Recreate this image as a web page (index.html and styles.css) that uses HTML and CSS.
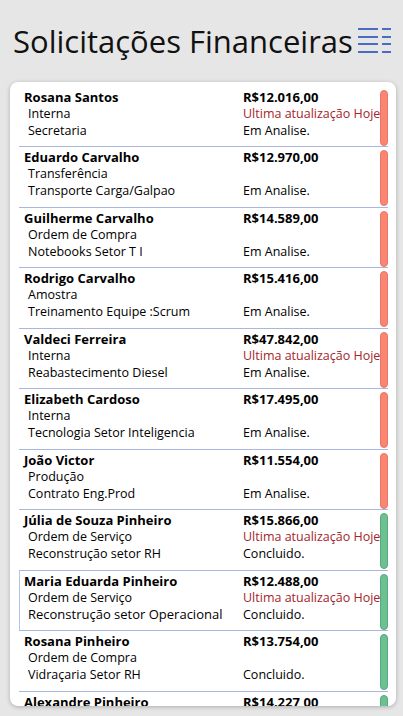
FILE: index.html
```html
<!DOCTYPE html>
<html lang="pt">
<head>
<meta charset="utf-8">
<title>Solicitações Financeiras</title>
<link rel="stylesheet" href="styles.css">
</head>
<body>
<header class="top">
  <h1 class="title">Solicitações Financeiras</h1>
  <svg class="menu" width="34" height="28" viewBox="0 0 34 28">
    <g stroke="#4a6cc4" stroke-width="2">
      <line x1="0" y1="2" x2="20" y2="2"/><line x1="24" y1="2" x2="33" y2="2"/>
      <line x1="0" y1="10" x2="20" y2="10"/><line x1="24" y1="10" x2="33" y2="10"/>
      <line x1="0" y1="17" x2="20" y2="17"/><line x1="24" y1="17" x2="33" y2="17"/>
      <line x1="0" y1="25" x2="20" y2="25"/><line x1="24" y1="25" x2="33" y2="25"/>
    </g>
  </svg>
</header>
<main class="card">
  <div class="list">
    <div class="row">
      <div class="col left"><div class="name">Rosana Santos</div><div class="sub">Interna</div><div class="sub">Secretaria</div></div>
      <div class="col right"><div class="amount">R$12.016,00</div><div class="upd">Ultima atualização Hoje</div><div class="sub">Em Analise.</div></div>
      <div class="bar red"></div>
    </div>
    <div class="row">
      <div class="col left"><div class="name">Eduardo Carvalho</div><div class="sub">Transferência</div><div class="sub">Transporte Carga/Galpao</div></div>
      <div class="col right"><div class="amount">R$12.970,00</div><div class="upd"></div><div class="sub">Em Analise.</div></div>
      <div class="bar red"></div>
    </div>
    <div class="row">
      <div class="col left"><div class="name">Guilherme Carvalho</div><div class="sub">Ordem de Compra</div><div class="sub">Notebooks Setor T I</div></div>
      <div class="col right"><div class="amount">R$14.589,00</div><div class="upd"></div><div class="sub">Em Analise.</div></div>
      <div class="bar red"></div>
    </div>
    <div class="row">
      <div class="col left"><div class="name">Rodrigo Carvalho</div><div class="sub">Amostra</div><div class="sub">Treinamento Equipe :Scrum</div></div>
      <div class="col right"><div class="amount">R$15.416,00</div><div class="upd"></div><div class="sub">Em Analise.</div></div>
      <div class="bar red"></div>
    </div>
    <div class="row">
      <div class="col left"><div class="name">Valdeci Ferreira</div><div class="sub">Interna</div><div class="sub">Reabastecimento Diesel</div></div>
      <div class="col right"><div class="amount">R$47.842,00</div><div class="upd">Ultima atualização Hoje</div><div class="sub">Em Analise.</div></div>
      <div class="bar red"></div>
    </div>
    <div class="row">
      <div class="col left"><div class="name">Elizabeth Cardoso</div><div class="sub">Interna</div><div class="sub">Tecnologia Setor Inteligencia</div></div>
      <div class="col right"><div class="amount">R$17.495,00</div><div class="upd"></div><div class="sub">Em Analise.</div></div>
      <div class="bar red"></div>
    </div>
    <div class="row">
      <div class="col left"><div class="name">João Victor</div><div class="sub">Produção</div><div class="sub">Contrato Eng.Prod</div></div>
      <div class="col right"><div class="amount">R$11.554,00</div><div class="upd"></div><div class="sub">Em Analise.</div></div>
      <div class="bar red"></div>
    </div>
    <div class="row">
      <div class="col left"><div class="name">Júlia de Souza Pinheiro</div><div class="sub">Ordem de Serviço</div><div class="sub">Reconstrução setor RH</div></div>
      <div class="col right"><div class="amount">R$15.866,00</div><div class="upd">Ultima atualização Hoje</div><div class="sub">Concluido.</div></div>
      <div class="bar green"></div>
    </div>
    <div class="row selected">
      <div class="col left"><div class="name">Maria Eduarda Pinheiro</div><div class="sub">Ordem de Serviço</div><div class="sub dark">Reconstrução setor Operacional</div></div>
      <div class="col right"><div class="amount">R$12.488,00</div><div class="upd">Ultima atualização Hoje</div><div class="sub">Concluido.</div></div>
      <div class="bar green"></div>
    </div>
    <div class="row">
      <div class="col left"><div class="name">Rosana Pinheiro</div><div class="sub">Ordem de Compra</div><div class="sub">Vidraçaria Setor RH</div></div>
      <div class="col right"><div class="amount">R$13.754,00</div><div class="upd"></div><div class="sub">Concluido.</div></div>
      <div class="bar green"></div>
    </div>
    <div class="row">
      <div class="col left"><div class="name">Alexandre Pinheiro</div><div class="sub">Ordem de Compra</div><div class="sub">Vidraçaria Setor RH</div></div>
      <div class="col right"><div class="amount">R$14.227,00</div><div class="upd"></div><div class="sub">Concluido.</div></div>
      <div class="bar green"></div>
    </div>
  </div>
</main>
</body>
</html>
```
FILE: styles.css
```css
html, body {
  margin: 0;
  padding: 0;
  background: #e6e6e6;
  font-family: "Open Sans", "Noto Sans", sans-serif;
  color: #000;
  height: 716px;
  overflow: hidden;
}
.top {
  display: flex;
  align-items: center;
  height: 82px;
  padding-left: 13px;
  box-sizing: border-box;
}
.title {
  margin: 0;
  font-weight: 400;
  font-size: 31px;
  line-height: 40px;
  color: #111;
  white-space: nowrap;
}
.menu {
  margin-left: 5px;
  margin-top: 0;
}
.card {
  margin: 0 7px 0 10px;
  height: 624px;
  background: #fff;
  border-radius: 8px;
  box-shadow: 0 1px 4px rgba(0,0,0,0.25);
  overflow: hidden;
  padding-top: 4.5px;
  box-sizing: border-box;
}
.list {
  display: flex;
  flex-direction: column;
}
.row {
  height: 60.5px;
  flex: none;
  box-sizing: border-box;
  margin: 0 8px 0 9px;
  border-bottom: 1px solid #a9b6df;
  display: grid;
  grid-template-columns: 224px 1fr 8px;
}
.row.selected {
  box-shadow: inset 1px 0 #b7c4e8;
}
.col {
  display: flex;
  flex-direction: column;
  overflow: hidden;
  white-space: nowrap;
  padding-top: 2px;
}
.left { padding-left: 5px; }
.name, .amount {
  font-weight: 700;
  font-size: 13px;
  line-height: 17px;
  height: 16px;
}
.sub, .upd {
  font-size: 12.5px;
  line-height: 17px;
  height: 17px;
}
.sub.dark { font-size: 13px; }
.left .sub { padding-left: 4px; }
.upd { color: #a4262c; }
.bar {
  margin-top: 3px;
  width: 8px;
  height: 56px;
  box-sizing: border-box;
  border-radius: 5px;
}
.red { background: #fb8571; border: 1px solid #e6786a; }
.green { background: #6cc190; border: 1px solid #5aa87d; }
```
